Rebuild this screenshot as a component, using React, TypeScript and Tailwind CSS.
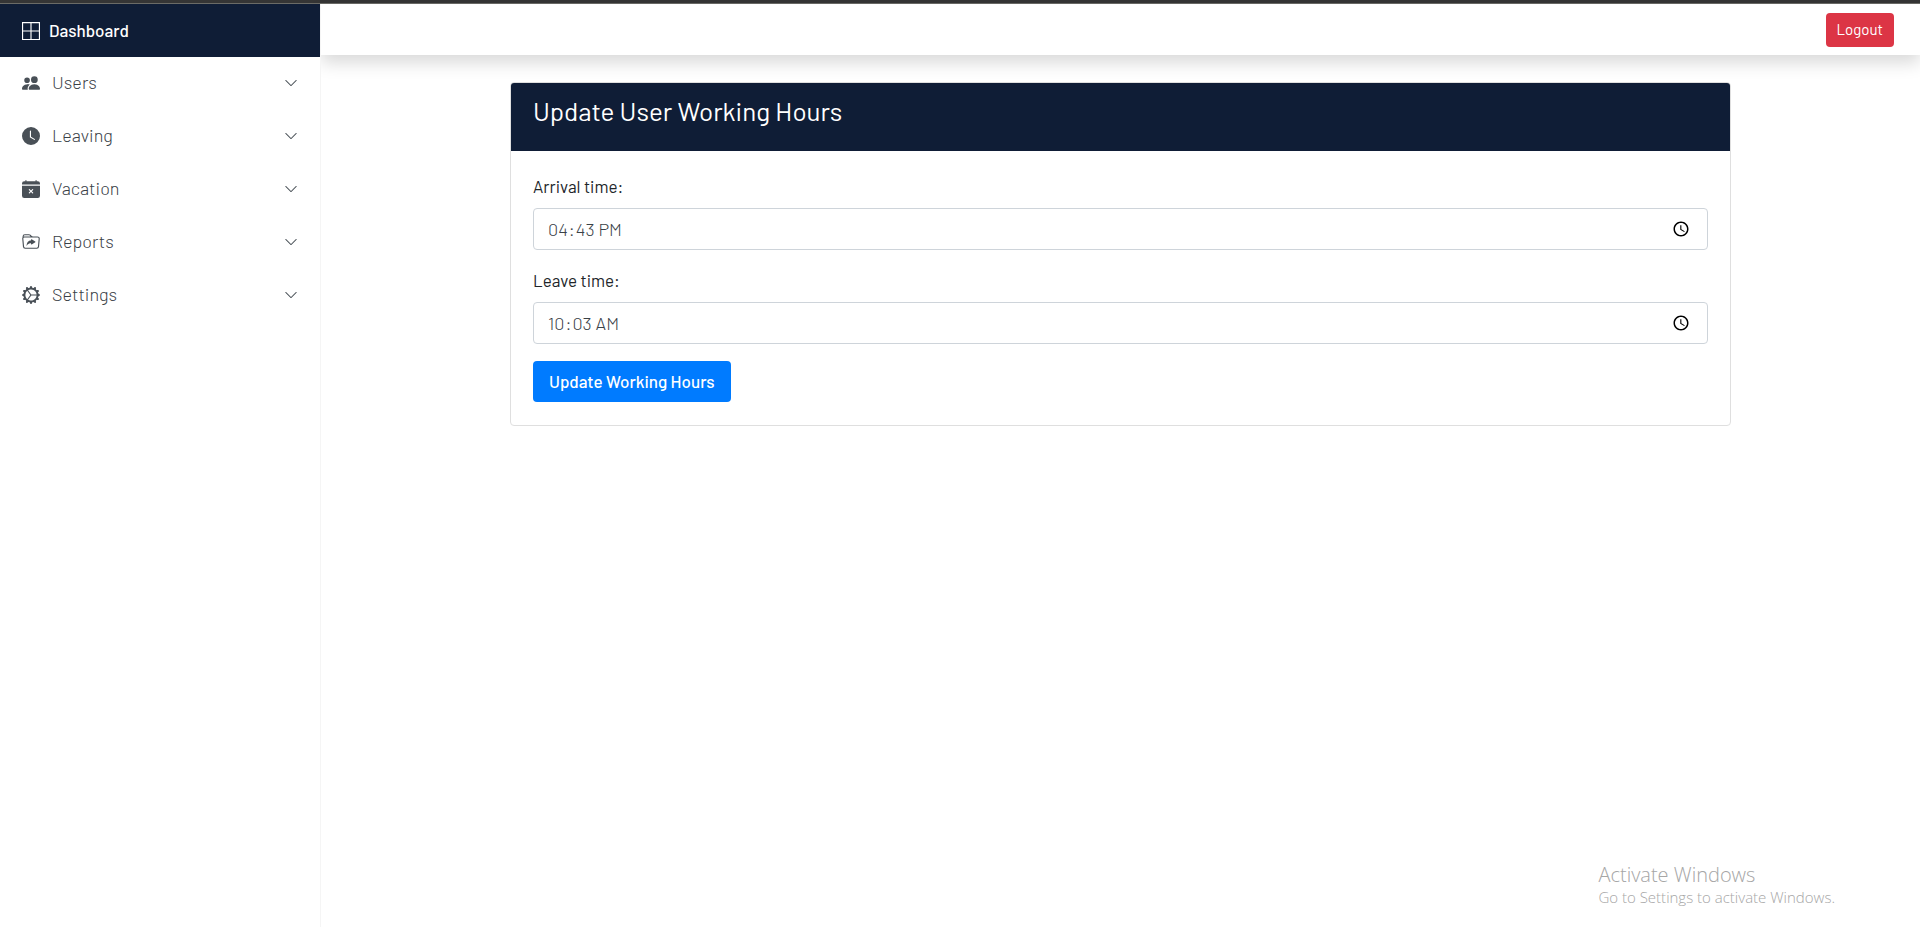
import { useState } from "react";
import type { IconType } from "react-icons";
import {
  BsBorderAll,
  BsCalendarXFill,
  BsChevronDown,
  BsClockFill,
  BsFolderSymlink,
  BsGearWideConnected,
  BsPeopleFill,
} from "react-icons/bs";

const menu: { label: string; Icon: IconType }[] = [
  { label: "Users", Icon: BsPeopleFill },
  { label: "Leaving", Icon: BsClockFill },
  { label: "Vacation", Icon: BsCalendarXFill },
  { label: "Reports", Icon: BsFolderSymlink },
  { label: "Settings", Icon: BsGearWideConnected },
];

function Sidebar() {
  return (
    <nav className="relative z-20 w-[321px] shrink-0 border-r border-[#f5f5f5] bg-white">
      <a href="#dashboard" className="flex h-[53px] items-center gap-[9px] bg-[#0f1d36] px-[22px] font-medium text-white">
        <BsBorderAll className="size-[18px]" />
        Dashboard
      </a>
      <ul>
        {menu.map(({ label, Icon }) => (
          <li key={label}>
            <button
              type="button"
              className="flex h-[53px] w-full items-center gap-3 px-[22px] pb-0.5 text-[18px] font-light text-[#3a4147]"
            >
              <Icon className="size-[18px] text-[#495057]" />
              <span>{label}</span>
              <BsChevronDown className="ml-auto size-[14px] text-[#495057]" />
            </button>
          </li>
        ))}
      </ul>
    </nav>
  );
}

function TimeField({ id, label, initial }: { id: string; label: string; initial: string }) {
  const [value, setValue] = useState(initial);
  return (
    <div className="mb-[17px]">
      <label htmlFor={id} className="mb-[9px] block leading-[26px]">
        {label}
      </label>
      <input
        id={id}
        type="time"
        value={value}
        onChange={(e) => setValue(e.target.value)}
        className="block h-[42px] w-full rounded border border-[#ced4da] bg-white px-[13px] text-[18px] font-light text-[#3a4147]"
      />
    </div>
  );
}

export default function App() {
  return (
    <div className="flex min-h-screen flex-col bg-white font-['Barlow','Roboto',sans-serif] text-[17px] text-[#212529]">
      <div className="h-1 border-b border-[#6b6b66] bg-[#353535]" />
      <div className="flex grow">
        <Sidebar />
        <div className="min-w-0 grow">
          <header className="flex h-[51px] items-center justify-end bg-white px-[26px] shadow-[0_8px_16px_rgba(0,0,0,0.15)]">
            <button type="button" className="h-[34px] rounded bg-[#dc3545] px-[11px] text-[15px] text-white">
              Logout
            </button>
          </header>
          <main className="px-6 pt-[27px]">
            <section className="relative mx-auto w-full max-w-[1221px] rounded border border-[#dfdfdf] bg-white">
              <h1 className="h-[68px] rounded-t-[3px] bg-[#0f1d36] px-[22px] pt-3 text-[26px] leading-8 text-white">
                Update User Working Hours
              </h1>
              <form className="px-[22px] pt-[22px] pb-[23px]" onSubmit={(e) => e.preventDefault()}>
                <TimeField id="arrival" label="Arrival time:" initial="16:43" />
                <TimeField id="leave" label="Leave time:" initial="10:03" />
                <button type="submit" className="h-[41px] rounded bg-[#007bff] px-4 font-medium text-white">
                  Update Working Hours
                </button>
              </form>
            </section>
          </main>
        </div>
      </div>
      <div className="pointer-events-none absolute right-[85px] bottom-5 z-30 font-['Segoe_UI','Open_Sans',sans-serif] font-light text-[#a6a6a6]">
        <p className="text-[20px] leading-6">Activate Windows</p>
        <p className="text-[15px] leading-5">Go to Settings to activate Windows.</p>
      </div>
    </div>
  );
}
